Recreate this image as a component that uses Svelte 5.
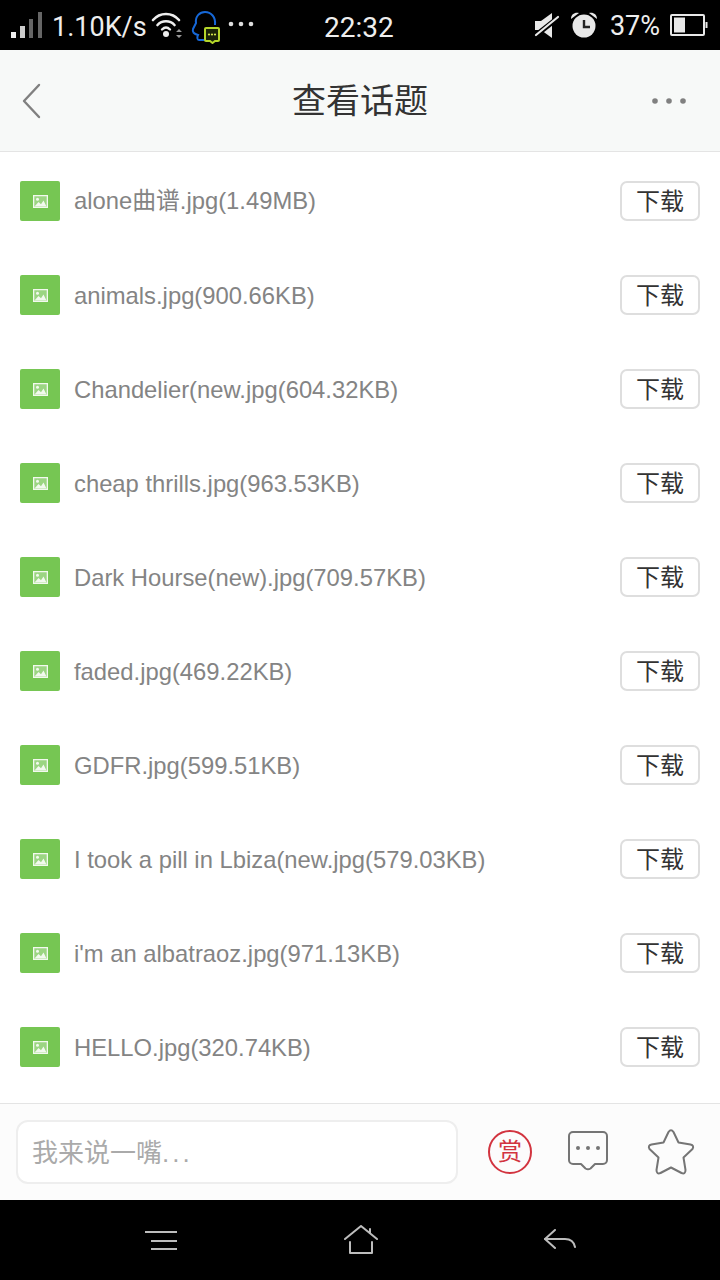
<script>
  const files = [
    'alone曲谱.jpg(1.49MB)',
    'animals.jpg(900.66KB)',
    'Chandelier(new.jpg(604.32KB)',
    'cheap thrills.jpg(963.53KB)',
    'Dark Hourse(new).jpg(709.57KB)',
    'faded.jpg(469.22KB)',
    'GDFR.jpg(599.51KB)',
    'I took a pill in Lbiza(new.jpg(579.03KB)',
    "i'm an albatraoz.jpg(971.13KB)",
    'HELLO.jpg(320.74KB)'
  ];
</script>

<div class="page">
  <div class="status">
    <div class="st-left">
      <svg class="signal" width="34" height="28" viewBox="0 0 34 28">
        <rect x="0" y="20" width="5" height="6" fill="#eee"/>
        <rect x="9" y="14" width="5" height="12" fill="#ccc"/>
        <rect x="18" y="7" width="4" height="19" fill="#666"/>
        <rect x="27" y="0" width="4" height="26" fill="#666"/>
      </svg>
      <span class="st-text speed">1.10K/s</span>
      <svg class="wifi" width="32" height="28" viewBox="0 0 32 28" fill="none" stroke="#eee" stroke-linecap="round">
        <path d="M2 8 C9 0 21 0 28 8" stroke-width="2.600"/>
        <path d="M6.500 13 C11 8 19 8 23.500 13" stroke-width="2.600"/>
        <path d="M11 17.500 C13.500 15 16.500 15 19 17.500" stroke-width="2.400"/>
        <circle cx="15" cy="22" r="3" fill="#eee" stroke="none"/>
        <path d="M25 20 L28 17 L31 20 Z M25 23 L31 23 L28 26 Z" fill="#999" stroke="none"/>
      </svg>
      <svg class="qq" width="30" height="34" viewBox="0 0 30 34" fill="none">
        <path d="M16 30 H8 C6 30 6 27 7 25 C3 24 1 22 2 19 C3 17 4 15 5 13 C4 6 9 2 14 2 C20 2 25 7 24 15" stroke="#1668d8" stroke-width="2"/>
        <path d="M14 19 a1 1 0 0 1 1 -1 H27 a1 1 0 0 1 1 1 V30 a1 1 0 0 1 -1 1 H24 L21.500 33 L19 31 H15 a1 1 0 0 1 -1 -1 Z" fill="#1a2408" stroke="#b5d62a" stroke-width="2"/>
        <circle cx="18" cy="24.500" r="1.100" fill="#d5e84a"/>
        <circle cx="21" cy="24.500" r="1.100" fill="#d5e84a"/>
        <circle cx="24" cy="24.500" r="1.100" fill="#d5e84a"/>
      </svg>
      <svg class="more-st" width="26" height="6" viewBox="0 0 26 6" fill="#ddd">
        <circle cx="3" cy="3" r="2.300"/><circle cx="13" cy="3" r="2.300"/><circle cx="23" cy="3" r="2.300"/>
      </svg>
    </div>
    <span class="st-text clock">22:32</span>
    <div class="st-right">
      <svg class="mute" width="26" height="28" viewBox="0 0 26 28">
        <path d="M1 10 H7 L18 2 V27 L7 19 H1 Z" fill="#e8e8e8"/>
        <path d="M1 25 L25 6" stroke="#000" stroke-width="5"/>
        <path d="M2 24 L24 6" stroke="#e8e8e8" stroke-width="2.200" stroke-linecap="round"/>
      </svg>
      <svg class="alarm" width="28" height="28" viewBox="0 0 28 28">
        <circle cx="14" cy="15" r="11.500" fill="#e8e8e8"/>
        <path d="M1 8 C1 3 5 1 9 2 Z M27 8 C27 3 23 1 19 2 Z" fill="#e8e8e8"/>
        <path d="M14 9 V16 H20" fill="none" stroke="#222" stroke-width="2.400"/>
      </svg>
      <span class="st-text pct">37%</span>
      <svg class="batt" width="38" height="24" viewBox="0 0 38 24">
        <rect x="1" y="2" width="33" height="20" fill="none" stroke="#e8e8e8" stroke-width="2" rx="1"/>
        <rect x="4" y="4.500" width="11" height="15" fill="#e8e8e8"/>
        <rect x="35.500" y="9" width="2" height="6" fill="#e8e8e8"/>
      </svg>
    </div>
  </div>

  <header class="header">
    <svg class="back" width="22" height="36" viewBox="0 0 22 36" fill="none" stroke="#808080" stroke-width="2.400" stroke-linecap="round" stroke-linejoin="round">
      <path d="M18 2 L3 18 L18 34"/>
    </svg>
    <h1>查看话题</h1>
    <svg class="more" width="36" height="8" viewBox="0 0 36 8" fill="#808080">
      <circle cx="4" cy="4" r="2.800"/><circle cx="18" cy="4" r="2.800"/><circle cx="32" cy="4" r="2.800"/>
    </svg>
  </header>

  <ul class="list">
    {#each files as file}
      <li class="row">
        <span class="thumb">
          <svg width="15" height="13" viewBox="0 0 15 13">
            <rect width="15" height="13" fill="#f2f9ee" fill-opacity="0.3"/>
            <path fill-rule="evenodd" fill="#f2f9ee" d="M0 0 H15 V13 H0 Z M1.300 1.300 V11.700 H13.700 V1.300 Z"/>
            <circle cx="4.500" cy="4.200" r="1.500" fill="#f2f9ee"/>
            <path d="M1.500 11.500 L5.500 7 L8 9.200 L10.500 5.500 L13.500 11.500 Z" fill="#f2f9ee"/>
          </svg>
        </span>
        <span class="name">{file}</span>
        <button class="dl">下载</button>
      </li>
    {/each}
  </ul>

  <footer class="bar">
    <div class="input">我来说一嘴<span class="dots">...</span></div>
    <span class="reward">赏</span>
    <svg class="comment" width="40" height="40" viewBox="0 0 40 40" fill="none" stroke="#757575" stroke-width="2">
      <path stroke-linejoin="round" d="M5 1 H35 A4 4 0 0 1 39 5 V29 A4 4 0 0 1 35 33 H27 L22.500 37.500 Q20 39 17.500 37.500 L13 33 H5 A4 4 0 0 1 1 29 V5 A4 4 0 0 1 5 1 Z"/>
      <circle cx="10" cy="17" r="2" fill="#757575" stroke="none"/>
      <circle cx="20" cy="17" r="2" fill="#757575" stroke="none"/>
      <circle cx="30" cy="17" r="2" fill="#757575" stroke="none"/>
    </svg>
    <svg class="star" width="48" height="46" viewBox="0 0 48 46" fill="none" stroke="#757575" stroke-width="2" stroke-linejoin="round">
      <path d="M21.500 3 Q24 -0.500 26.500 3 L31.500 13.500 L43.500 15.500 Q47.500 16.500 45.500 20 L36.500 28.500 L38.500 41 Q38.500 45.500 34.500 44 L24 38.500 L13.500 44 Q9.500 45.500 9.500 41 L11.500 28.500 L2.500 20 Q0.500 16.500 4.500 15.500 L16.500 13.500 Z"/>
    </svg>
  </footer>

  <nav class="nav">
    <svg width="33" height="24" viewBox="0 0 33 24" fill="none" stroke="#bdbdbd" stroke-width="2">
      <path d="M0 4 H32 M6 13 H32 M6 21 H32"/>
    </svg>
    <svg class="home" width="34" height="30" viewBox="0 0 34 30" fill="none" stroke="#bdbdbd" stroke-width="2" stroke-linecap="round" stroke-linejoin="round">
      <path d="M1 14 L17 1 L33 14 M26 8 V4"/>
      <path d="M6 17 V28 H28 V17"/>
    </svg>
    <svg class="ret" width="33" height="22" viewBox="0 0 33 22" fill="none" stroke="#bdbdbd" stroke-width="2" stroke-linecap="round" stroke-linejoin="round">
      <path d="M12 1 L2 10 L12 19"/>
      <path d="M2 10 H22 C28 10 31 13 32 18"/>
    </svg>
  </nav>
</div>

<style>
  :global(body) {
    margin: 0;
    background: #fff;
  }
  .page {
    width: 720px;
    height: 1280px;
    display: flex;
    flex-direction: column;
    overflow: hidden;
    font-family: "Liberation Sans", "Noto Sans CJK SC", sans-serif;
  }
  .status {
    height: 50px;
    flex: none;
    background: #000;
    position: relative;
    display: flex;
    align-items: center;
    justify-content: space-between;
    padding: 0 12px 0 11px;
    box-sizing: border-box;
  }
  .st-text {
    color: #eee;
    font-family: Roboto, "Liberation Sans", sans-serif;
    font-size: 27px;
    line-height: 50px;
  }
  .st-left, .st-right {
    display: flex;
    align-items: center;
  }
  .signal { margin-left: 0; margin-top: 2px; width: 34px; }
  .speed { margin-left: 7px; position: relative; top: 2px; }
  .wifi { margin-left: 4px; margin-top: 2px; }
  .qq { margin-left: 8px; margin-top: 4px; }
  .more-st { margin-left: 7px; margin-top: -2px; }
  .clock {
    position: absolute;
    left: 324px;
    top: 3px;
    font-size: 28px;
  }
  .mute { margin-right: 10px; }
  .alarm { margin-right: 12px; }
  .pct { margin-right: 10px; position: relative; top: 1px; }
  .header {
    height: 102px;
    flex: none;
    box-sizing: border-box;
    background: #f7f9f8;
    border-bottom: 1px solid #e4e4e4;
    display: flex;
    align-items: center;
    justify-content: space-between;
    padding: 0 33px 0 21px;
    position: relative;
  }
  h1 {
    position: absolute;
    left: 0;
    right: 0;
    top: 26px;
    margin: 0;
    text-align: center;
    font-size: 34px;
    line-height: 50px;
    font-weight: 400;
    color: #333;
  }
  .list {
    list-style: none;
    margin: 0;
    padding: 2px 0 0;
    flex: 1;
    background: #fff;
  }
  .row {
    height: 94px;
    display: flex;
    align-items: center;
    padding: 0 20px;
    box-sizing: border-box;
  }
  .thumb {
    width: 40px;
    height: 40px;
    flex: none;
    background: #76c653;
    border-radius: 2px;
    display: flex;
    align-items: center;
    justify-content: center;
  }
  .name {
    flex: 1;
    margin-left: 14px;
    font-size: 23.800px;
    line-height: 40px;
    color: #848484;
  }
  .row:not(:first-child) .name {
    padding-top: 2px;
  }
  .dl {
    width: 80px;
    height: 40px;
    padding: 2px 0 0;
    box-sizing: border-box;
    background: #fff;
    border: 2px solid #dedede;
    border-radius: 7px;
    font: inherit;
    font-size: 24px;
    line-height: 34px;
    color: #333;
  }
  .bar {
    height: 97px;
    flex: none;
    box-sizing: border-box;
    background: #fcfcfc;
    border-top: 1px solid #e4e4e4;
    display: flex;
    align-items: center;
    padding: 0 0 0 16px;
  }
  .input {
    width: 442px;
    height: 64px;
    box-sizing: border-box;
    background: #fff;
    border: 2px solid #eee;
    border-radius: 12px;
    padding-left: 14px;
    font-size: 26px;
    line-height: 62px;
    color: #aaa;
  }
  .dots { letter-spacing: 3px; }
  .reward {
    width: 44px;
    height: 44px;
    box-sizing: border-box;
    margin-left: 30px;
    border: 2px solid #d2343f;
    border-radius: 50%;
    color: #d2343f;
    font-size: 24px;
    line-height: 40px;
    text-align: center;
  }
  .comment { margin-left: 36px; margin-top: -2px; }
  .star { margin-left: 39px; }
  .nav {
    height: 80px;
    flex: none;
    background: #000;
    display: flex;
    align-items: center;
    justify-content: space-between;
    padding: 0 144px 0 145px;
  }
</style>
